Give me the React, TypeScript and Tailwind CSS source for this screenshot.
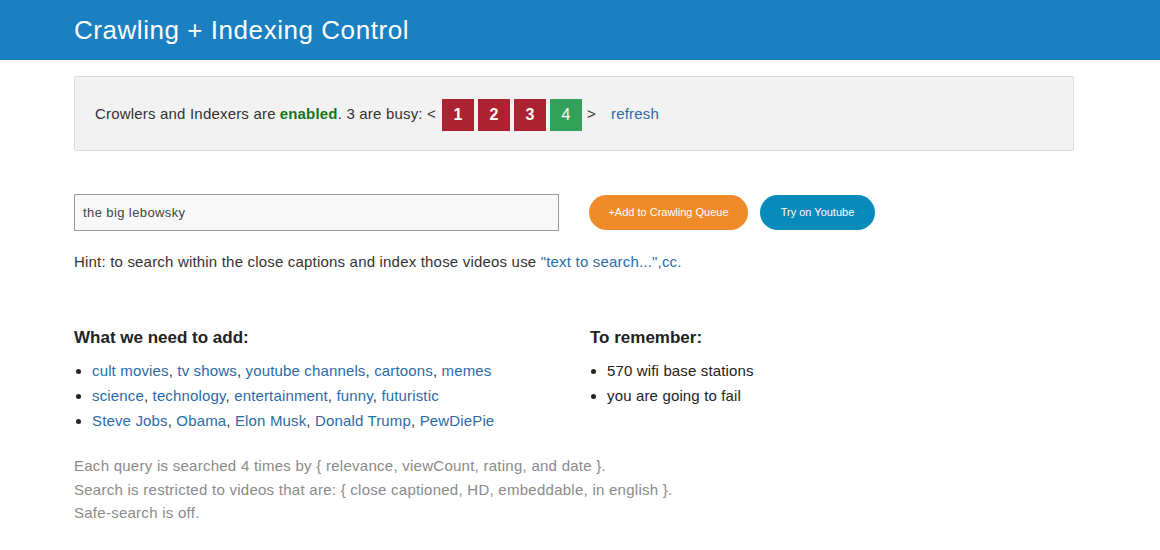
import React from "react";

const Link = ({ children }: { children: React.ReactNode }) => (
  <a className="text-[#2a6ca8]">{children}</a>
);

export default function App() {
  const f = { fontFamily: '"Liberation Sans", Arial, sans-serif' };
  return (
    <div style={f} className="min-h-[550px] bg-white text-[#333] text-[15px] tracking-[0.19px]">
      <header className="h-[60px] bg-[#1a80c2] flex items-center">
        <h1 className="ml-[74px] text-white text-[26px] leading-none font-normal tracking-[0.55px]">
          Crawling + Indexing Control
        </h1>
      </header>
      <main className="mx-[74px] w-[1000px]">
        <div className="mt-[16px] h-[75px] bg-[#f2f2f2] border border-[#dcdcdc] rounded-[2px] flex items-center pl-[20px] pt-[2px]">
          <span>Crowlers and Indexers are </span>
          <b className="text-[#16761a] ml-[4px]">enabled</b>
          <span>. 3 are busy: &lt;</span>
          <div className="flex gap-[4px] ml-[6px] tracking-normal">
            <span className="w-[32px] h-[32px] bg-[#ad2230] text-white font-bold flex items-center justify-center text-[16px]">1</span>
            <span className="w-[32px] h-[32px] bg-[#ad2230] text-white font-bold flex items-center justify-center text-[16px]">2</span>
            <span className="w-[32px] h-[32px] bg-[#ad2230] text-white font-bold flex items-center justify-center text-[16px]">3</span>
            <span className="w-[32px] h-[32px] bg-[#34a15a] text-white flex items-center justify-center text-[16px]">4</span>
          </div>
          <span className="ml-[5px]">&gt;</span>
          <a className="ml-[15px] text-[#2a6ca8]">refresh</a>
        </div>

        <div className="mt-[43px] flex items-center">
          <div className="w-[485px] h-[37px] border border-[#9a9a9a] bg-[#f8f8f8] flex items-center px-[8px] text-[13px] text-[#444] tracking-[0.4px]">
            the big lebowsky
          </div>
          <button className="ml-[30px] h-[35px] w-[159px] rounded-full bg-[#f08b29] text-white text-[11px] tracking-normal">
            +Add to Crawling Queue
          </button>
          <button className="ml-[12px] h-[35px] w-[115px] rounded-full bg-[#078bba] text-white text-[11px] tracking-normal">
            Try on Youtube
          </button>
        </div>

        <p className="mt-[21px] leading-[20px]">
          Hint: to search within the close captions and index those videos use{" "}
          <Link>"text to search...",cc.</Link>
        </p>

        <div className="mt-[56px] flex">
          <div className="w-[516px]">
            <h3 className="font-bold text-[17px] leading-[20px] text-[#222] tracking-normal">What we need to add:</h3>
            <ul className="mt-[10px] list-disc pl-[18px] leading-[25px] marker:text-[#222] tracking-[0.15px]">
              <li>
                <Link>cult movies</Link>, <Link>tv shows</Link>, <Link>youtube channels</Link>, <Link>cartoons</Link>, <Link>memes</Link>
              </li>
              <li>
                <Link>science</Link>, <Link>technology</Link>, <Link>entertainment</Link>, <Link>funny</Link>, <Link>futuristic</Link>
              </li>
              <li>
                <Link>Steve Jobs</Link>, <Link>Obama</Link>, <Link>Elon Musk</Link>, <Link>Donald Trump</Link>, <Link>PewDiePie</Link>
              </li>
            </ul>
          </div>
          <div>
            <h3 className="font-bold text-[17px] leading-[20px] text-[#222] tracking-normal">To remember:</h3>
            <ul className="mt-[10px] list-disc pl-[17px] leading-[25px] text-[#222] tracking-[0.15px]">
              <li>570 wifi base stations</li>
              <li>you are going to fail</li>
            </ul>
          </div>
        </div>

        <div className="mt-[21px] text-[#8a8a8a] leading-[23.5px] tracking-[0.26px]">
          <p>Each query is searched 4 times by {"{"} relevance, viewCount, rating, and date {"}"}.</p>
          <p>Search is restricted to videos that are: {"{"} close captioned, HD, embeddable, in english {"}"}.</p>
          <p>Safe-search is off.</p>
        </div>
      </main>
    </div>
  );
}
